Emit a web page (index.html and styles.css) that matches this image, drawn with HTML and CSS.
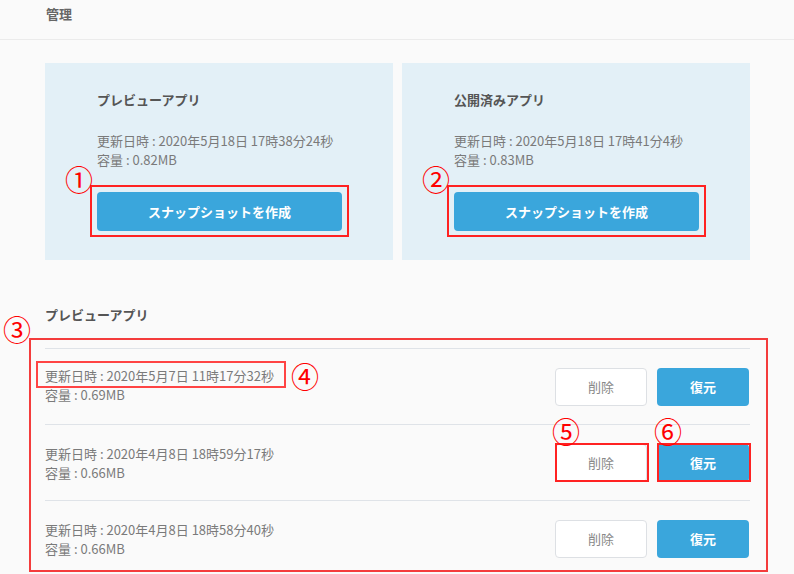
FILE: index.html
```html
<!DOCTYPE html>
<html lang="ja">
<head>
  <meta charset="UTF-8" />
  <title>管理</title>
  <link rel="stylesheet" href="styles.css">
</head>
<body>
  <div class="page-header">管理</div>

  <div class="content">
    <div class="cards">
      <div class="card">
        <div class="card-title">プレビューアプリ</div>
        <div class="info">
          <div>更新日時 : 2020年5月18日 17時38分24秒</div>
          <div>容量 : 0.82MB</div>
        </div>
        <div class="marked">
          <button class="btn-snapshot">スナップショットを作成</button>
          <span class="mark-box box-btn"></span>
          <span class="note note-tl">①</span>
        </div>
      </div>
      <div class="card">
        <div class="card-title">公開済みアプリ</div>
        <div class="info">
          <div>更新日時 : 2020年5月18日 17時41分4秒</div>
          <div>容量 : 0.83MB</div>
        </div>
        <div class="marked">
          <button class="btn-snapshot">スナップショットを作成</button>
          <span class="mark-box box-btn"></span>
          <span class="note note-tl">②</span>
        </div>
      </div>
    </div>

    <div class="section-title">プレビューアプリ</div>

    <div class="list">
      <span class="mark-box box-list"></span>
      <span class="note note-list">③</span>

      <div class="row">
        <div class="info">
          <div class="marked date">
            更新日時 : 2020年5月7日 11時17分32秒
            <span class="mark-box box-date"></span>
            <span class="note note-date">④</span>
          </div>
          <div>容量 : 0.69MB</div>
        </div>
        <div class="actions">
          <button class="btn-delete">削除</button>
          <button class="btn-restore">復元</button>
        </div>
      </div>

      <div class="row">
        <div class="info">
          <div>更新日時 : 2020年4月8日 18時59分17秒</div>
          <div>容量 : 0.66MB</div>
        </div>
        <div class="actions">
          <div class="marked">
            <button class="btn-delete">削除</button>
            <span class="mark-box box-small"></span>
            <span class="note note-top">⑤</span>
          </div>
          <div class="marked">
            <button class="btn-restore">復元</button>
            <span class="mark-box box-small"></span>
            <span class="note note-top">⑥</span>
          </div>
        </div>
      </div>

      <div class="row">
        <div class="info">
          <div>更新日時 : 2020年4月8日 18時58分40秒</div>
          <div>容量 : 0.66MB</div>
        </div>
        <div class="actions">
          <button class="btn-delete">削除</button>
          <button class="btn-restore">復元</button>
        </div>
      </div>
    </div>
  </div>
</body>
</html>
```

FILE: styles.css
```css
body {
  margin: 0;
  background: #fafafa;
  font-family: "Noto Sans CJK JP", "Noto Sans", sans-serif;
  color: #777;
  font-size: 13px;
}

.page-header {
  height: 39px;
  line-height: 28px;
  padding-left: 46px;
  border-bottom: 1px solid #ebebeb;
  color: #666;
  font-size: 13px;
  font-weight: bold;
}

.content {
  padding: 23px 44px 0 45px;
}

.cards {
  display: grid;
  grid-template-columns: 348px 348px;
  gap: 9px;
}

.card {
  background: #e3f0f7;
  height: 197px;
  box-sizing: border-box;
  padding: 27px 0 0 52px;
}

.card-title,
.section-title {
  font-weight: bold;
  color: #555;
  line-height: 20px;
}

.info {
  line-height: 19px;
  color: #7a7a7a;
}

.card .info {
  margin-top: 21px;
}

.card .marked {
  margin-top: 23px;
  width: 245px;
}

button {
  font-family: inherit;
  font-size: 13px;
  border-radius: 4px;
  cursor: pointer;
  display: block;
}

.btn-snapshot {
  width: 245px;
  height: 39px;
  border: none;
  background: #3aa6dc;
  color: #fff;
  font-weight: bold;
}

.section-title {
  margin-top: 45px;
}

.list {
  position: relative;
  margin-top: 23px;
}

.row {
  display: flex;
  align-items: center;
  justify-content: space-between;
  height: 76px;
  box-sizing: border-box;
  border-top: 1px solid #dfe3e8;
}

.row:first-of-type .info {
  margin-top: -3px;
}

.actions {
  display: flex;
  gap: 10px;
  padding-right: 1px;
}

.btn-delete,
.btn-restore {
  width: 92px;
  height: 38px;
}

.btn-delete {
  background: #fff;
  border: 1px solid #dde0e4;
  color: #888;
}

.btn-restore {
  background: #3aa6dc;
  border: none;
  color: #fff;
  font-weight: bold;
}

/* annotation marks */
.marked {
  position: relative;
}

.mark-box {
  position: absolute;
  border: 2px solid #f22;
  pointer-events: none;
}

.note {
  position: absolute;
  color: #f00;
  font-size: 28px;
  line-height: 1;
  font-family: "Noto Sans CJK JP", sans-serif;
}

.box-btn {
  left: -7px;
  right: -7px;
  top: -7px;
  bottom: -6px;
}

.note-tl {
  left: -32px;
  top: -27px;
}

.box-list {
  border-color: #f43c3c;
  left: -16px;
  right: -18px;
  top: -10px;
  bottom: 4px;
}

.note-list {
  left: -42px;
  top: -33px;
}

.date {
  width: fit-content;
}

.box-date {
  border-color: #f44;
  left: -9px;
  right: -12px;
  top: -5px;
  bottom: -3px;
}

.note-date {
  right: -45px;
  top: -4px;
}

.box-small {
  left: 0;
  right: -2px;
  top: -1px;
  bottom: 0;
}

.note-top {
  left: -3px;
  top: -27px;
}
```
